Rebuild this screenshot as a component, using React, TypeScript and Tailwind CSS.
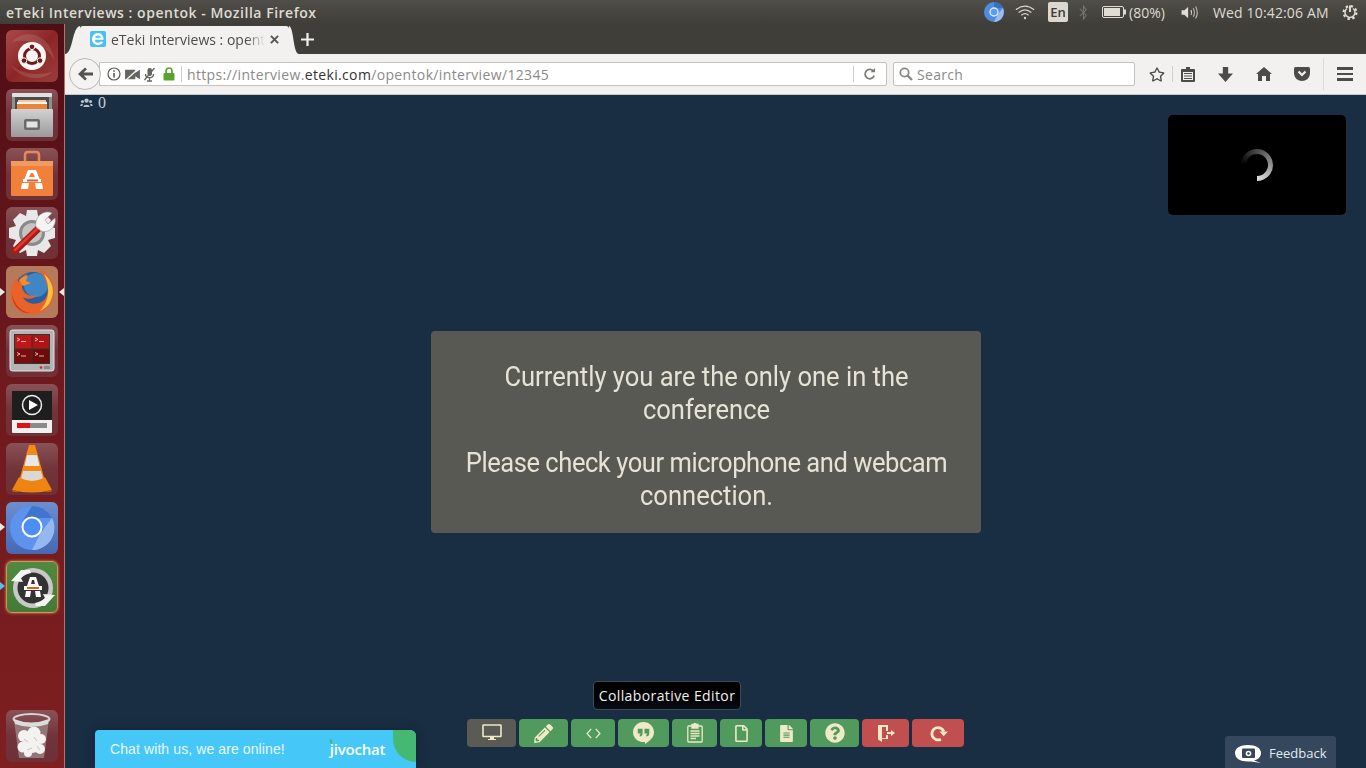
import React from 'react';
import { FaPencilAlt, FaFileAlt, FaQuestionCircle, FaRegFile, FaRegStar } from 'react-icons/fa';

const ubuntu = { fontFamily: '"Open Sans", "Noto Sans", sans-serif' };

const Tile: React.FC<{ className?: string; children: React.ReactNode }> = ({ className, children }) => (
  <div className={`w-[52px] h-[52px] rounded-md overflow-hidden ${className ?? 'bg-gradient-to-b from-[#8a5256] via-[#70343a] to-[#6f3036]'}`}>
    <svg viewBox="0 0 52 52" className="w-[52px] h-[52px]">{children}</svg>
  </div>
);

const DashIcon = () => (
  <Tile className="bg-gradient-to-br from-[#a84a4a] via-[#8c2626] to-[#9a3c3c]">
    <path d="M6 12 C20 -4 46 6 48 30 C40 14 22 8 6 12Z" fill="#fff" opacity="0.12" />
    <path d="M4 34 C14 50 36 52 46 42 C30 46 14 44 4 34Z" fill="#fff" opacity="0.12" />
    <circle cx="26" cy="26" r="14" fill="#fbf6f3" />
    <circle cx="26" cy="26" r="7.5" fill="none" stroke="#6d1a1c" strokeWidth="3" />
    <circle cx="26" cy="16.8" r="2.8" fill="#6d1a1c" stroke="#fbf6f3" strokeWidth="1" />
    <circle cx="18" cy="30.6" r="2.8" fill="#6d1a1c" stroke="#fbf6f3" strokeWidth="1" />
    <circle cx="34" cy="30.6" r="2.8" fill="#6d1a1c" stroke="#fbf6f3" strokeWidth="1" />
  </Tile>
);

const FilesIcon = () => (
  <Tile>
    <defs>
      <linearGradient id="cab" x1="0" y1="0" x2="0" y2="1">
        <stop offset="0" stopColor="#d2d2d2" />
        <stop offset="1" stopColor="#9a9a9a" />
      </linearGradient>
    </defs>
    <rect x="6" y="4" width="40" height="44" rx="2" fill="#8f8f8f" />
    <rect x="6" y="4" width="40" height="4" rx="1" fill="#e0e0e0" />
    <rect x="9" y="8" width="34" height="12" fill="#4c4c4c" />
    <rect x="12" y="11" width="28" height="2" fill="#f6c79a" />
    <rect x="11" y="13" width="30" height="2" fill="#f8f4ee" />
    <rect x="11" y="15" width="30" height="5" fill="#e8843e" />
    <rect x="5" y="20" width="42" height="28" rx="1" fill="url(#cab)" />
    <rect x="18" y="30" width="16" height="11" rx="2" fill="#6a6a6a" />
    <rect x="20.5" y="32.5" width="11" height="6" rx="0.5" fill="#e4e4e4" />
  </Tile>
);

const StoreIcon = () => (
  <Tile>
    <path d="M19 16 V7 Q19 4 22 4 H30 Q33 4 33 7 V16" fill="none" stroke="#e48a5a" strokeWidth="2.5" />
    <rect x="5" y="13" width="42" height="35" rx="1.5" fill="#f0803a" />
    <rect x="5" y="13" width="42" height="5" fill="#f29a60" />
    <path d="M22 22 H30 L34 32 H18Z M25 25 L23 29 H29 L27 25Z" fill="#fff" fillRule="evenodd" />
    <rect x="17" y="31" width="18" height="3" fill="#fff" />
    <rect x="21" y="31.5" width="11" height="2" fill="#e2582a" />
    <path d="M16 35 H23 L22 41 H15Z M29 35 H36 L37 41 H30Z" fill="#fff" />
  </Tile>
);

const SettingsIcon = () => (
  <Tile>
    <path d="M21 3 H31 L32 9 L38 6 L45 13 L42 19 L49 21 V31 L42 33 L45 39 L38 46 L32 43 L31 49 H21 L20 43 L14 46 L7 39 L10 33 L3 31 V21 L10 19 L7 13 L14 6 L20 9Z" fill="#e8e8e8" />
    <circle cx="26" cy="26" r="13" fill="#8a8a8a" />
    <circle cx="26" cy="26" r="10" fill="#c4c4c4" />
    <path d="M9 44 L33 21" stroke="#a81c16" strokeWidth="7" strokeLinecap="round" />
    <path d="M9 43 L32 21" stroke="#e03a2c" strokeWidth="2.5" strokeLinecap="round" />
    <path d="M30 20 C28 10 38 2 46 6 L39 13 L42 17 L49 11 C51 19 43 27 35 24Z" fill="#f4f4f4" stroke="#999" strokeWidth="0.6" />
  </Tile>
);

const FirefoxIcon = () => (
  <Tile className="bg-[#b57a5c]">
    <circle cx="27" cy="25" r="19" fill="#2a5f9e" />
    <circle cx="30" cy="19" r="12" fill="#3f86c4" />
    <path d="M32 3 C44 8 51 20 47 32 C44 44 32 50 22 48 C10 47 3 35 5 24 C6 18 8 14 11 11 C11 14 12 15 13 16 C14 12 18 9 21 8 C19 11 19 13 20 15 C16 17 15 21 17 24 C19 29 26 31 32 29 C28 33 21 34 17 31 C20 38 30 40 37 35 C44 30 44 16 32 3Z" fill="#e8622a" />
    <path d="M38 8 C47 15 49 26 45 34 C43 40 38 43 34 45 C40 38 43 30 42 22 C42 17 40 12 38 8Z" fill="#fcc03a" />
    <path d="M6 28 C8 38 15 46 24 47 C15 48 6 40 6 28Z" fill="#c93c1e" />
    <path d="M13 14 C16 11 20 10 22 9 L20 15 L25 17 L17 20Z" fill="#f68a2e" />
  </Tile>
);

const WorkspacesIcon = () => (
  <Tile>
    <rect x="4" y="5" width="44" height="41" rx="2.5" fill="#b4b4b4" />
    <rect x="4" y="5" width="44" height="41" rx="2.5" fill="none" stroke="#e2e2e2" />
    <rect x="8" y="9" width="36" height="30" fill="#333" />
    <rect x="9" y="10" width="16.5" height="13.5" fill="#c01616" />
    <rect x="26.5" y="10" width="16.5" height="13.5" fill="#b01414" />
    <rect x="9" y="24.5" width="16.5" height="13.5" fill="#7a0c0c" />
    <rect x="26.5" y="24.5" width="16.5" height="13.5" fill="#6e0a0a" />
    <path d="M11 13 L14 14.5 L11 16 M15 16.5 H20 M11 27.5 L14 29 L11 30.5 M15 31 H20 M29 13 L32 14.5 L29 16 M33 16.5 H38 M29 27.5 L32 29 L29 30.5 M33 31 H38" stroke="#fff" strokeWidth="0.7" fill="none" />
    <circle cx="35" cy="42.5" r="1.3" fill="#e02020" />
    <rect x="38" y="41" width="6" height="3" fill="#8a8a8a" />
  </Tile>
);

const VideoIcon = () => (
  <Tile>
    <rect x="6" y="7" width="40" height="42" rx="1" fill="#f0f0f0" />
    <rect x="6" y="7" width="40" height="29" fill="#1e1e1e" />
    <circle cx="26" cy="21" r="9.5" fill="none" stroke="#eee" strokeWidth="1.5" />
    <path d="M23 16 L32 21 L23 26Z" fill="#fff" />
    <rect x="11" y="39" width="30" height="5" fill="#8a8a8a" />
    <rect x="11" y="39" width="13" height="5" fill="#e01010" />
  </Tile>
);

const VlcIcon = () => (
  <Tile>
    <path d="M23 2 H29 L39 38 H13Z" fill="#f58a12" />
    <path d="M21 12 H31 L33.5 23 H18.5Z" fill="#e8e8e8" />
    <path d="M17 28 H35 L37 36 Q26 40 15 36Z" fill="#d8d8d8" />
    <path d="M13 34 L6 47 Q26 52 46 47 L39 34 Q26 42 13 34Z" fill="#ef8510" />
    <path d="M6 47 Q26 52 46 47 L45 49 H7Z" fill="#b65f08" />
  </Tile>
);

const ChromiumIcon = () => (
  <Tile className="bg-gradient-to-b from-[#6d8fce] to-[#4668b4]">
    <circle cx="26" cy="26" r="22" fill="#5d93ec" />
    <path d="M26 4 A22 22 0 0 1 46 16 L26 16 A10 10 0 0 0 16 20Z" fill="#3f74cf" />
    <path d="M46 16 A22 22 0 0 1 26 48 L34 32Z" fill="#94b8f2" />
    <circle cx="26" cy="25" r="9.5" fill="#4d8ef5" stroke="#fff" strokeWidth="2" />
  </Tile>
);

const UpdaterIcon = () => (
  <Tile className="bg-gradient-to-b from-[#52893f] to-[#437a36] border border-[#d9925a] shadow-[0_0_3px_#e9a060]">
    <circle cx="26" cy="26" r="20" fill="#c8c8c8" />
    <circle cx="26" cy="26" r="15.5" fill="#333" />
    <path d="M23 15 H29 L32 24 H20Z M25 18 L24 22 H28 L27 18Z" fill="#fff" fillRule="evenodd" />
    <rect x="17" y="24" width="18" height="4" fill="#fff" />
    <rect x="20" y="25" width="12" height="2" fill="#ea5a1c" />
    <path d="M19 29 H24 L23 35 H18Z M28 29 H33 L34 35 H29Z" fill="#fff" />
    <path d="M14 8 L4 19 L16 20 L14 16 Q18 12 24 11 L23 8Z" fill="#f4f4f4" />
    <path d="M38 44 L48 33 L36 32 L38 36 Q34 40 28 41 L29 44Z" fill="#f4f4f4" />
  </Tile>
);

const TrashIcon = () => (
  <Tile>
    <path d="M8 10 L13 48 H38 L43 10 Q25 18 8 10Z" fill="#9a8083" opacity="0.85" />
    <g fill="#f2f2f0">
      <circle cx="18" cy="26" r="6" />
      <circle cx="28" cy="23" r="6.5" />
      <circle cx="35" cy="29" r="5" />
      <circle cx="17" cy="37" r="5.5" />
      <circle cx="26" cy="35" r="8" />
      <circle cx="34" cy="39" r="5" />
      <circle cx="22" cy="43" r="4" />
    </g>
    <path d="M18 29 L22 32 M28 27 L31 31 M21 40 L26 38 M31 36 L34 40" stroke="#c4c4c4" fill="none" />
    <ellipse cx="25.5" cy="9" rx="18" ry="5" fill="none" stroke="#d4d4d4" strokeWidth="2" />
    <path d="M8 9 Q25 16 43 9 L42 14 Q25 20 9 14Z" fill="#dcdcdc" />
  </Tile>
);

const Launcher = () => (
  <div className="relative w-[65px] shrink-0 flex flex-col items-center gap-[7px] pt-[6px] pb-[6px] pr-[1px] bg-gradient-to-b from-[#4f0e15] via-[#701a1e] to-[#7e1f20] border-r border-[#b4726a]">
    <DashIcon />
    <FilesIcon />
    <StoreIcon />
    <SettingsIcon />
    <FirefoxIcon />
    <WorkspacesIcon />
    <VideoIcon />
    <VlcIcon />
    <ChromiumIcon />
    <UpdaterIcon />
    <div className="mt-auto"><TrashIcon /></div>
    <span className="absolute left-0 top-[264px] border-y-[4px] border-y-transparent border-l-[5px] border-l-[#e8e8e8]" />
    <span className="absolute right-0 top-[264px] border-y-[4px] border-y-transparent border-r-[5px] border-r-[#e8e8e8]" />
    <span className="absolute left-0 top-[499px] border-y-[4px] border-y-transparent border-l-[5px] border-l-[#e8e8e8]" />
    <span className="absolute left-0 top-[558px] border-y-[4px] border-y-transparent border-l-[5px] border-l-[#55c0f0]" />
  </div>
);

const TopBar = () => (
  <div className="h-6 shrink-0 flex items-center justify-between pl-[6px] pr-[8px] bg-gradient-to-b from-[#504e49] to-[#3f3e39] text-[#dfdbd2] text-[14px]" style={ubuntu}>
    <span className="font-semibold tracking-[0.52px]">eTeki Interviews : opentok - Mozilla Firefox</span>
    <div className="flex items-center h-6">
      <svg viewBox="0 0 22 22" className="w-[22px] h-[22px]">
        <circle cx="11" cy="11" r="10" fill="#4f8be0" />
        <path d="M11 1 A10 10 0 0 1 20 7 L11 7Z" fill="#3a6fc4" />
        <path d="M20 7 A10 10 0 0 1 11 21 L15 13Z" fill="#9cbcf0" />
        <circle cx="11" cy="11" r="4" fill="#5a9cf5" stroke="#dfe8f8" strokeWidth="1.4" />
      </svg>
      <svg viewBox="0 0 22 16" className="w-[20px] h-[15px] ml-[10px]" fill="none" stroke="#d8d5cc" strokeWidth="1.3">
        <path d="M1 5 Q11 -3 21 5" />
        <path d="M4 8 Q11 2 18 8" />
        <path d="M7 11 Q11 7.5 15 11" />
        <circle cx="11" cy="14" r="1.3" fill="#d8d5cc" stroke="none" />
      </svg>
      <div className="ml-[13px] w-[20px] h-[20px] rounded-[2px] bg-[#dcd8d0] text-[#3c3b37] text-[13px] font-semibold leading-[20px] text-center">En</div>
      <svg viewBox="0 0 10 16" className="w-[9px] h-[15px] ml-[11px]" fill="none" stroke="#77756f" strokeWidth="1.2">
        <path d="M1 4 L8 11 L5 15 V1 L8 5 L1 12" />
      </svg>
      <svg viewBox="0 0 24 12" className="w-[24px] h-[12px] ml-[14px]">
        <rect x="0.5" y="0.5" width="21" height="11" rx="1.5" fill="none" stroke="#e0ddd5" />
        <rect x="2" y="2" width="16" height="8" fill="#e0ddd5" />
        <rect x="22" y="3.5" width="2" height="5" fill="#e0ddd5" />
      </svg>
      <span className="ml-[3px] w-[39px] whitespace-nowrap">(80%)</span>
      <svg viewBox="0 0 20 16" className="w-[20px] h-[15px] ml-[12px]" fill="none" stroke="#bcb9b0" strokeWidth="1.2">
        <path d="M1 5.5 H4 L8 2 V14 L4 10.5 H1Z" fill="#e0ddd5" stroke="none" />
        <path d="M11 5.5 Q12.5 8 11 10.5" stroke="#e0ddd5" />
        <path d="M13.5 3.5 Q16 8 13.5 12.5" />
        <path d="M16 1.5 Q19.5 8 16 14.5" />
      </svg>
      <span className="ml-[13px] w-[117px] whitespace-nowrap tracking-[0.15px]">Wed 10:42:06 AM</span>
      <svg viewBox="0 0 16 16" className="w-[16px] h-[16px] ml-[12px]" fill="none" stroke="#dfdbd2" strokeWidth="1.5">
        <circle cx="8" cy="8.5" r="6.4" strokeWidth="2.2" strokeDasharray="2.4 2.6" />
        <path d="M5 4.5 A5 5 0 1 0 11 4.5" />
        <path d="M8 1.5 V8" strokeWidth="2" />
      </svg>
    </div>
  </div>
);

const TabStrip = () => (
  <div className="h-[30px] shrink-0 bg-[#3f3e39] flex items-end relative" style={ubuntu}>
    <svg viewBox="0 0 15 28" className="w-[15px] h-[28px] block shrink-0">
      <path d="M0 28 C8 28 7 1 15 0 V28Z" fill="#f2f1f0" />
    </svg>
    <div className="w-[209px] h-[28px] bg-[#f2f1f0] rounded-t-[3px] flex items-center pl-[10px] pb-[2px] text-[14px] text-[#4c4c4c]">
      <svg viewBox="0 0 16 16" className="w-[16px] h-[16px] shrink-0">
        <rect width="16" height="16" rx="2" fill="#45c1f5" />
        <path d="M2 8.8 H13.5 C13.8 4.5 11 2 8 2 C4.5 2 2 4.8 2 8 C2 11.5 4.5 14 8 14 C10.2 14 12 13.2 13.3 11.6 L11 10.3 C10.4 11 9.2 11.8 8 11.8 C6.2 11.8 5 10.6 4.8 8.8Z M5 6.8 C5.3 5.3 6.5 4.4 8 4.4 C9.5 4.4 10.7 5.3 11 6.8Z" fill="#fff" fillRule="evenodd" />
      </svg>
      <span className="ml-[5px] w-[154px] overflow-hidden whitespace-nowrap [mask-image:linear-gradient(to_right,#000_88%,transparent)]">eTeki Interviews : opentok</span>
      <svg viewBox="0 0 10 10" className="w-[9px] h-[9px] ml-[5px]" stroke="#555" strokeWidth="2.2">
        <path d="M1 1 L9 9 M9 1 L1 9" />
      </svg>
    </div>
    <svg viewBox="0 0 10 28" className="w-[10px] h-[28px] block shrink-0">
      <path d="M10 28 C4 28 5 1 0 0 V28Z" fill="#f2f1f0" />
    </svg>
    <svg viewBox="0 0 14 14" className="w-[13px] h-[13px] ml-[2px] mb-[8px]" stroke="#f2f1f0" strokeWidth="2.4">
      <path d="M7 0 V14 M0 7 H14" />
    </svg>
  </div>
);

const NavBar = () => (
  <div className="h-[41px] shrink-0 bg-[#f2f1f0] border-b border-[#c9c7c3] flex items-center pl-[4px] relative" style={ubuntu}>
    <div className="w-[32px] h-[32px] rounded-full bg-[#f4f3f2] border border-[#b8b6b2] flex items-center justify-center shrink-0 z-10">
      <svg viewBox="0 0 16 14" className="w-[15px] h-[14px]" fill="#55534f">
        <path d="M7.5 0 L0 7 L7.5 14 L9.5 12 L6 8.7 H16 V5.3 H6 L9.5 2Z" />
      </svg>
    </div>
    <div className="-ml-[2px] w-[788px] h-[24px] bg-white border border-[#c4c2bd] rounded-r-[2px] flex items-center pl-[7px] text-[14px] shrink-0">
      <svg viewBox="0 0 14 14" className="w-[14px] h-[14px] shrink-0" fill="none" stroke="#5c5a56" strokeWidth="1.2">
        <circle cx="7" cy="7" r="6" />
        <path d="M7 6 V10.5 M7 3.2 V4.8" strokeWidth="1.6" />
      </svg>
      <svg viewBox="0 0 16 14" className="w-[15px] h-[13px] ml-[4px] shrink-0" fill="#66645f">
        <path d="M0 2 H11 V12 H0Z M11 5 L16 2 V12 L11 9Z" />
        <path d="M1 13 L14 1" stroke="#f7f7f7" strokeWidth="1.4" />
      </svg>
      <svg viewBox="0 0 12 15" className="w-[13px] h-[15px] ml-[3px] shrink-0" fill="none" stroke="#66645f" strokeWidth="1.3">
        <rect x="4" y="1" width="4.5" height="8" rx="2.2" fill="#66645f" stroke="none" />
        <path d="M2 7 C2 12 10 12 10 7 M6 11 V14 M3.5 14 H8.5 M1 13 L11 1" />
      </svg>
      <svg viewBox="0 0 12 14" className="w-[12px] h-[14px] ml-[7px] shrink-0">
        <path d="M3 6 V4 A3 3 0 0 1 9 4 V6" fill="none" stroke="#57a52c" strokeWidth="1.7" />
        <rect x="0.5" y="6" width="11" height="7.5" rx="1" fill="#57a52c" />
      </svg>
      <span className="ml-[6px] mr-[5px] h-[16px] border-l border-[#cfcdc9]" />
      <span className="whitespace-nowrap tracking-[0.35px] text-[#8a8a88]">https://interview.<span className="text-[#333]">eteki.com</span>/opentok/interview/12345</span>
      <span className="ml-auto h-[16px] border-l border-[#cfcdc9]" />
      <svg viewBox="0 0 14 14" className="w-[13px] h-[13px] ml-[9px] mr-[10px]" fill="none" stroke="#7d7b77" strokeWidth="1.9">
        <path d="M11.5 4 A5 5 0 1 0 12 8" />
        <path d="M8 4.5 H13 V0" fill="#7d7b77" stroke="none" />
      </svg>
    </div>
    <div className="ml-[6px] w-[242px] h-[24px] bg-white border border-[#c4c2bd] rounded-[2px] flex items-center pl-[5px] text-[14px] text-[#8a8a88] shrink-0">
      <svg viewBox="0 0 14 14" className="w-[14px] h-[14px]" fill="none" stroke="#8b8985" strokeWidth="1.8">
        <circle cx="5.5" cy="5.5" r="4.2" />
        <path d="M8.5 8.5 L13 13" strokeWidth="2.4" />
      </svg>
      <span className="ml-[4px] tracking-[0.3px]">Search</span>
    </div>
    <div className="ml-[14px] w-[16px] shrink-0 flex items-center justify-center text-[#4d4b47]">
      <FaRegStar size={17} />
    </div>
    <span className="ml-[7px] h-[16px] border-l border-[#d0cecb]" />
    <svg viewBox="0 0 14 15" className="w-[14px] h-[15px] ml-[8px] shrink-0" fill="#4d4b47">
      <path d="M5 0 H9 V2 H13 Q14 2 14 3 V14 Q14 15 13 15 H1 Q0 15 0 14 V3 Q0 2 1 2 H5Z M2 5 V13 H12 V5Z" fillRule="evenodd" />
      <path d="M3 6 H11 V7 H3Z M3 8.5 H11 V9.5 H3Z M3 11 H11 V12 H3Z" />
    </svg>
    <svg viewBox="0 0 14 14" className="w-[15px] h-[15px] ml-[23px] shrink-0" fill="#4d4b47">
      <path d="M4.5 0 H9.5 V6 H14 L7 14 L0 6 H4.5Z" />
    </svg>
    <svg viewBox="0 0 16 14" className="w-[16px] h-[14px] ml-[23px] shrink-0" fill="#4d4b47">
      <path d="M8 0 L16 7 H14 V14 H10 V9 H6 V14 H2 V7 H0Z" />
    </svg>
    <svg viewBox="0 0 16 14" className="w-[16px] h-[14px] ml-[22px] shrink-0" fill="#4d4b47">
      <path d="M1.5 0 H14.5 Q16 0 16 1.5 V6 C16 11 12 14 8 14 C4 14 0 11 0 6 V1.5 Q0 0 1.5 0Z" />
      <path d="M4.5 4.5 L8 8 L11.5 4.5" fill="none" stroke="#f2f1f0" strokeWidth="2.2" />
    </svg>
    <span className="ml-[13px] h-[32px] border-l border-[#dcdad7]" />
    <div className="ml-[13px] flex flex-col gap-[3px]">
      <span className="block w-[16px] h-[2.5px] bg-[#4d4b47]" />
      <span className="block w-[16px] h-[2.5px] bg-[#4d4b47]" />
      <span className="block w-[16px] h-[2.5px] bg-[#4d4b47]" />
    </div>
  </div>
);

const cream = '#efe9c6';

const ToolButton: React.FC<{ className: string; children: React.ReactNode }> = ({ className, children }) => (
  <div className={`h-[28px] rounded-[4px] flex items-center justify-center ${className}`}>{children}</div>
);

const Toolbar = () => (
  <div className="h-[49px] shrink-0 flex justify-center gap-[3px]">
    <ToolButton className="w-[49px] bg-[#5a5b55]">
      <svg viewBox="0 0 20 18" className="w-[20px] h-[18px]" fill="none">
        <rect x="1" y="1" width="18" height="11.5" rx="0.5" stroke={cream} strokeWidth="1.6" />
        <path d="M8 13 H12 V15 H14 V16 H6 V15 H8Z" fill={cream} />
      </svg>
    </ToolButton>
    <ToolButton className="w-[49px] bg-[#4f9a5c]"><FaPencilAlt size={19} color={cream} /></ToolButton>
    <ToolButton className="w-[44px] bg-[#4f9a5c]">
      <svg viewBox="0 0 16 12" className="w-[15px] h-[11px]" fill="none" stroke={cream} strokeWidth="1.4">
        <path d="M5.5 1 L1 6 L5.5 11 M10.5 1 L15 6 L10.5 11" />
      </svg>
    </ToolButton>
    <ToolButton className="w-[51px] bg-[#4f9a5c]">
      <svg viewBox="0 0 22 24" className="w-[21px] h-[23px]">
        <path d="M11 0 C17 0 22 4.8 22 10.7 C22 16.5 17 20 12.5 23 V20.9 C11.9 21 11.5 21 11 21 C5 21 0 16.5 0 10.7 C0 4.8 5 0 11 0Z" fill={cream} />
        <path d="M5 7 H10 V12 C10 14 8.8 15 7 15.2 V13 C7.6 13 8 12.6 8 12 H5Z M12 7 H17 V12 C17 14 15.8 15 14 15.2 V13 C14.6 13 15 12.6 15 12 H12Z" fill="#4f9a5c" />
      </svg>
    </ToolButton>
    <ToolButton className="w-[45px] bg-[#4f9a5c]">
      <svg viewBox="0 0 16 20" className="w-[16px] h-[20px]" fill="none" stroke={cream} strokeWidth="1.3">
        <rect x="0.8" y="3" width="14.4" height="16" rx="1" />
        <path d="M5 1.5 H7 A1 1 0 0 1 9 1.5 H11 V5 H5Z" fill={cream} />
        <path d="M3.5 8 H12.5 M3.5 10.5 H12.5 M3.5 13 H12.5 M3.5 15.5 H9" />
      </svg>
    </ToolButton>
    <ToolButton className="w-[42px] bg-[#4f9a5c]"><FaRegFile size={17} color={cream} /></ToolButton>
    <ToolButton className="w-[42px] bg-[#4f9a5c]"><FaFileAlt size={17} color={cream} /></ToolButton>
    <ToolButton className="w-[49px] bg-[#4f9a5c]"><FaQuestionCircle size={20} color={cream} /></ToolButton>
    <ToolButton className="w-[47px] bg-[#c14f4f]">
      <svg viewBox="0 0 18 18" className="w-[18px] h-[18px]" fill={cream}>
        <path d="M1 1 H11 V7 H9 V3 H5 V14 H9 V11 H11 V15 H5 V18 L1 15.5Z" />
        <path d="M10 8 H14 V6 L18 9 L14 12 V10 H10Z" />
      </svg>
    </ToolButton>
    <ToolButton className="w-[52px] bg-[#c14f4f]">
      <svg viewBox="0 0 20 18" className="w-[19px] h-[17px]" fill="none" stroke={cream} strokeWidth="3">
        <path d="M12.5 15 A6.5 6.5 0 1 1 15.6 7" />
        <path d="M11 7 H20 L15.5 12Z" fill={cream} stroke="none" />
      </svg>
    </ToolButton>
  </div>
);

const Content = () => (
  <div className="relative flex-1 min-h-0 flex flex-col bg-[#192d43]">
    <div className="h-[15px] shrink-0 flex items-center pl-[15px] gap-[5px] text-[#c3ccd4]">
      <svg viewBox="0 0 14 10" className="w-[13px] h-[9px]" fill="#b8c2cc">
        <circle cx="7" cy="3" r="2.4" />
        <path d="M3.5 10 C3.5 6.5 10.5 6.5 10.5 10Z" />
        <circle cx="2.5" cy="3.8" r="1.7" />
        <circle cx="11.5" cy="3.8" r="1.7" />
        <path d="M0 9 C0 6.6 2 6 3 6.4 L2.5 9Z M14 9 C14 6.6 12 6 11 6.4 L11.5 9Z" />
      </svg>
      <span className="text-[16px] leading-[15px] font-['Liberation_Serif',serif]">0</span>
    </div>
    <div className="flex-1 min-h-0 flex items-center justify-center pt-[35px] pr-[19px]">
      <div className="w-[550px] h-[202px] bg-[#585953] rounded-[4px] pt-[29px] flex justify-center text-center text-[#e6e3d6] text-[28px] leading-[33px] font-['Roboto',sans-serif]">
        <div className="w-[559px] shrink-0 scale-x-[0.912]">
          <p className="mb-[20px]">Currently you are the only one in the conference</p>
          <p><span className="tracking-[-0.5px]">Please check your microphone and webcam</span> connection.</p>
        </div>
      </div>
    </div>
    <Toolbar />

    {/* floating over the page */}
    <div className="absolute top-[20px] right-[20px] w-[178px] h-[100px] bg-black rounded-[5px] flex items-center justify-center">
      <div className="w-[32px] h-[32px] rounded-full bg-[conic-gradient(from_270deg,#000_0deg,#dedede_270deg,#000_270deg)] flex items-center justify-center">
        <div className="w-[22px] h-[22px] rounded-full bg-black" />
      </div>
    </div>
    <div className="absolute left-[528px] bottom-[58px] w-[148px] h-[29px] bg-gradient-to-b from-[#000] to-[#0c0e16] border border-[#3c4a5c] rounded-[4px] flex items-center justify-center text-[14px] tracking-[0.4px] text-[#f0f0f0]" style={ubuntu}>
      Collaborative Editor
    </div>
    <div className="absolute left-[30px] bottom-0 w-[321px] h-[38px] bg-[#45c7f8] rounded-tl-[4px] rounded-tr-[6px] overflow-hidden flex items-center pl-[15px] shadow-[0_0_12px_rgba(0,0,0,0.25)] text-[14px] tracking-[0.1px] text-[#e9f8fe] font-['Liberation_Sans',sans-serif]">
      <span>Chat with us, we are online!</span>
      <span className="ml-[45px] text-[15px] font-semibold tracking-[-0.2px] text-white font-['Open_Sans',sans-serif]">jivochat</span>
      <div className="absolute left-[235px] top-[9px] w-[2px] h-[5px] bg-[#45b974] rounded-full -rotate-12" />
      <div className="absolute right-0 top-0 w-[23px] h-[32px] bg-[#45b974] rounded-bl-full" />
    </div>
    <div className="absolute left-[1160px] bottom-0 w-[111px] h-[32px] bg-[#34475c] rounded-t-[3px] flex items-center pl-[9px] pt-[4px] text-[13px] text-[#e2eaf0]" style={ubuntu}>
      <svg viewBox="0 0 28 20" className="w-[28px] h-[20px] shrink-0">
        <path d="M14 1 C22 1 27 4 27 9 C27 13 24 15.5 20 16.5 L27 19 L17 17.5 H14 C6 17.5 1 14 1 9 C1 4 6 1 14 1Z" fill="#fff" />
        <rect x="8" y="4.5" width="13" height="9.5" rx="1" fill="#34475c" />
        <circle cx="14.5" cy="9.5" r="2.8" fill="#fff" />
        <circle cx="14.5" cy="9.5" r="1.3" fill="#34475c" />
      </svg>
      <span className="ml-[7px]">Feedback</span>
    </div>
  </div>
);

export default function App() {
  return (
    <div className="w-[1366px] h-[768px] overflow-hidden flex flex-col">
      <TopBar />
      <div className="flex flex-1 min-h-0">
        <Launcher />
        <div className="flex-1 min-w-0 flex flex-col">
          <TabStrip />
          <NavBar />
          <Content />
        </div>
      </div>
    </div>
  );
}
